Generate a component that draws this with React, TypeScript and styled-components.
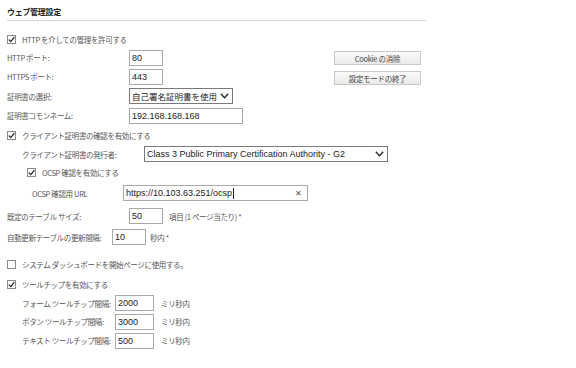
import styled, { createGlobalStyle } from "styled-components";

const Global = createGlobalStyle`
	body {
		margin: 0;
		background: #fff;
		font-family: "Noto Sans CJK JP", "Liberation Sans", sans-serif;
		color: #333;
	}
`;

const Page = styled.div`
	width: 576px;
	height: 368px;
	padding: 6px 7px 0 7px;
	box-sizing: border-box;
	overflow: hidden;
`;

const Title = styled.div`
	width: 419px;
	font-size: 8px;
	font-weight: bold;
	letter-spacing: -0.3px;
	color: #222;
	padding-bottom: 2px;
	border-bottom: 1px solid #d6d6d6;
	line-height: 12px;
`;

const Top = styled.div`
	display: flex;
	margin-top: 10px;
`;

const Form = styled.div`
	display: flex;
	flex-direction: column;
	width: 327px;
`;

const Side = styled.div`
	display: flex;
	flex-direction: column;
	gap: 6px;
	padding-top: 20px;
`;

const Row = styled.div<{ $h?: number; $indent?: number }>`
	display: flex;
	align-items: center;
	height: ${p => p.$h ?? 19}px;
	padding-left: ${p => p.$indent ?? 0}px;
	font-size: 7.5px;
	letter-spacing: -0.35px;
	color: #555;
	white-space: nowrap;
`;

const Label = styled.span<{ $w: number }>`
	width: ${p => p.$w}px;
	flex: none;
`;

const Input = styled.div<{ $w: number }>`
	width: ${p => p.$w}px;
	height: 16px;
	box-sizing: border-box;
	border: 1px solid #a9a9a9;
	font-family: "Liberation Sans", Arial, sans-serif;
	font-size: 9px;
	letter-spacing: 0;
	color: #222;
	padding: 0 2px;
	display: flex;
	align-items: center;
	flex: none;
`;

const Select = styled(Input)<{ $jp?: boolean }>`
	border-color: #7a7a7a;
	padding-right: 3px;
	justify-content: space-between;
	font-family: ${p => (p.$jp ? '"Noto Sans CJK JP", sans-serif' : '"Liberation Sans", Arial, sans-serif')};
	font-size: ${p => (p.$jp ? 8.5 : 9)}px;
`;

const Caret = styled.span`
	width: 1px;
	height: 11px;
	background: #222;
	margin-left: 1px;
`;

const Clear = styled.span`
	font-size: 8px;
	color: #555;
	margin-left: auto;
	margin-right: 3px;
`;

const Unit = styled.span<{ $gap?: number }>`
	margin-left: ${p => p.$gap ?? 6}px;
	color: #555;
`;

const Box = styled.span`
	width: 9px;
	height: 9px;
	box-sizing: border-box;
	border: 1px solid #8a8a8a;
	margin-right: 6px;
	flex: none;
	display: flex;
	align-items: center;
	justify-content: center;
	background: #fff;
`;

const Button = styled.div`
	width: 87px;
	height: 14px;
	box-sizing: border-box;
	border: 1px solid #c8c8c8;
	background: linear-gradient(#fbfbfb, #e9e9e9);
	font-size: 7.5px;
	letter-spacing: -0.3px;
	color: #444;
	display: flex;
	align-items: center;
	justify-content: center;
`;

const Gap = styled.div<{ $h: number }>`
	height: ${p => p.$h}px;
`;

const Check = ({ on = true }: { on?: boolean }) => (
	<Box>
		{on && (
			<svg width="7" height="7" viewBox="0 0 7 7">
				<path d="M0.8 3.6 L2.8 5.6 L6.4 1.2" fill="none" stroke="#222" strokeWidth="1.3" />
			</svg>
		)}
	</Box>
);

const Chevron = () => (
	<svg width="9" height="6" viewBox="0 0 9 6">
		<path d="M0.8 0.8 L4.5 4.8 L8.2 0.8" fill="none" stroke="#222" strokeWidth="1.3" />
	</svg>
);

export default function App() {
	return (
		<Page>
			<Global />
			<Title>ウェブ管理設定</Title>
			<Top>
				<Form>
					<Row $h={17}>
						<Check />
						HTTP を介しての管理を許可する
					</Row>
					<Row>
						<Label $w={122}>HTTP ポート:</Label>
						<Input $w={34}>80</Input>
					</Row>
					<Row>
						<Label $w={122}>HTTPS ポート:</Label>
						<Input $w={34}>443</Input>
					</Row>
					<Row $h={20}>
						<Label $w={122}>証明書の選択:</Label>
						<Select $w={104} $jp>
							自己署名証明書を使用
							<Chevron />
						</Select>
					</Row>
					<Row>
						<Label $w={122}>証明書コモンネーム:</Label>
						<Input $w={114}>192.168.168.168</Input>
					</Row>
				</Form>
				<Side>
					<Button>Cookie の消除</Button>
					<Button>設定モードの終了</Button>
				</Side>
			</Top>
			<Row $h={20}>
				<Check />
				クライアント証明書の確認を有効にする
			</Row>
			<Row $h={18} $indent={15}>
				<Label $w={122}>クライアント証明書の発行者:</Label>
				<Select $w={244}>
					Class 3 Public Primary Certification Authority - G2
					<Chevron />
				</Select>
			</Row>
			<Row $h={18} $indent={20}>
				<Check />
				OCSP 確認を有効にする
			</Row>
			<Row $h={24} $indent={25}>
				<Label $w={91}>OCSP 確認用 URL</Label>
				<Input $w={185}>
					https://10.103.63.251/ocsp
					<Caret />
					<Clear>✕</Clear>
				</Input>
			</Row>
			<Row $h={22}>
				<Label $w={122}>既定のテーブル サイズ:</Label>
				<Input $w={34}>50</Input>
				<Unit>項目 (1 ページ当たり) *</Unit>
			</Row>
			<Row $h={20}>
				<Label $w={105}>自動更新テーブルの更新間隔:</Label>
				<Input $w={34}>10</Input>
				<Unit $gap={4}>秒内 *</Unit>
			</Row>
			<Gap $h={7} />
			<Row $h={20}>
				<Check on={false} />
				システム ダッシュボードを開始ページに使用する。
			</Row>
			<Row $h={20}>
				<Check />
				ツールチップを有効にする
			</Row>
			<Row $h={18} $indent={15}>
				<Label $w={93}>フォーム ツールチップ間隔:</Label>
				<Input $w={39}>2000</Input>
				<Unit $gap={7}>ミリ秒内</Unit>
			</Row>
			<Row $h={19} $indent={15}>
				<Label $w={93}>ボタン ツールチップ間隔:</Label>
				<Input $w={39}>3000</Input>
				<Unit $gap={7}>ミリ秒内</Unit>
			</Row>
			<Row $h={19} $indent={15}>
				<Label $w={93}>テキスト ツールチップ間隔:</Label>
				<Input $w={39}>500</Input>
				<Unit $gap={7}>ミリ秒内</Unit>
			</Row>
		</Page>
	);
}
